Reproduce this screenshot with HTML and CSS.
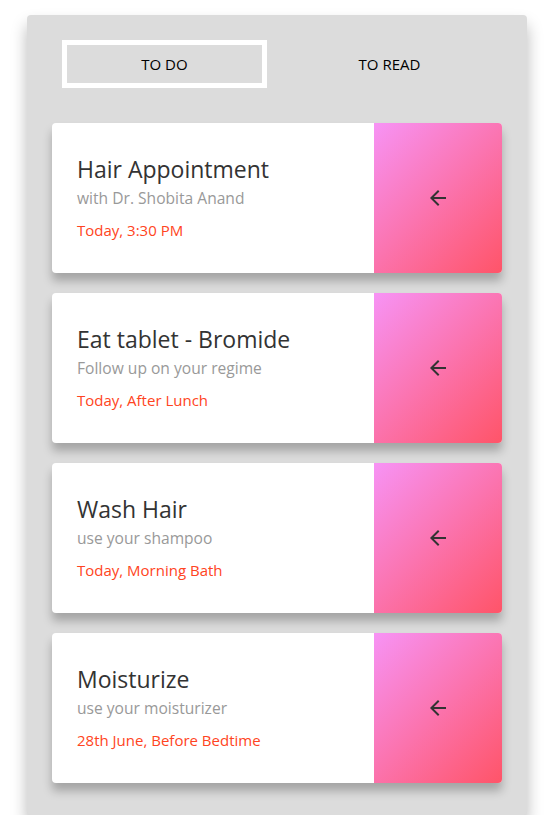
FILE: index.html
```html
<!DOCTYPE html>
<html lang="en">
<head>
<meta charset="utf-8">
<title>Tasks</title>
<link rel="stylesheet" href="styles.css">
</head>
<body>
<div class="panel">
  <nav class="tabs">
    <div class="tab active">TO DO</div>
    <div class="tab">TO READ</div>
  </nav>
  <div class="list">
    <div class="card">
      <div class="info">
        <div class="title">Hair Appointment</div>
        <div class="sub">with Dr. Shobita Anand</div>
        <div class="when">Today, 3:30 PM</div>
      </div>
      <div class="action"><svg class="arrow" viewBox="0 0 24 24" width="24" height="24"><path d="M20 11H7.83l5.59-5.59L12 4l-8 8 8 8 1.41-1.41L7.83 13H20v-2z"/></svg></div>
    </div>
    <div class="card">
      <div class="info">
        <div class="title">Eat tablet - Bromide</div>
        <div class="sub">Follow up on your regime</div>
        <div class="when">Today, After Lunch</div>
      </div>
      <div class="action"><svg class="arrow" viewBox="0 0 24 24" width="24" height="24"><path d="M20 11H7.83l5.59-5.59L12 4l-8 8 8 8 1.41-1.41L7.83 13H20v-2z"/></svg></div>
    </div>
    <div class="card">
      <div class="info">
        <div class="title">Wash Hair</div>
        <div class="sub">use your shampoo</div>
        <div class="when">Today, Morning Bath</div>
      </div>
      <div class="action"><svg class="arrow" viewBox="0 0 24 24" width="24" height="24"><path d="M20 11H7.83l5.59-5.59L12 4l-8 8 8 8 1.41-1.41L7.83 13H20v-2z"/></svg></div>
    </div>
    <div class="card">
      <div class="info">
        <div class="title">Moisturize</div>
        <div class="sub">use your moisturizer</div>
        <div class="when">28th June, Before Bedtime</div>
      </div>
      <div class="action"><svg class="arrow" viewBox="0 0 24 24" width="24" height="24"><path d="M20 11H7.83l5.59-5.59L12 4l-8 8 8 8 1.41-1.41L7.83 13H20v-2z"/></svg></div>
    </div>
  </div>
</div>
</body>
</html>
```

FILE: styles.css
```css
* { box-sizing: border-box; }
html, body { margin: 0; padding: 0; background: #fff; }
body { font-family: "Open Sans", "Noto Sans", sans-serif; }

.panel {
  width: 500px;
  margin: 15px auto 0;
  background: #dcdcdc;
  border-radius: 4px;
  padding: 25px 25px 32px;
  box-shadow: 0 10px 16px rgba(0,0,0,0.28);
}

.tabs {
  display: grid;
  grid-template-columns: 1fr 1fr;
  gap: 20px;
  padding: 0 10px;
  margin-bottom: 35px;
}
.tab {
  height: 48px;
  display: flex;
  align-items: center;
  justify-content: center;
  font-size: 15px;
  color: #000;
  border: 5px solid transparent;
}
.tab.active { border-color: #fff; }

.list { display: flex; flex-direction: column; gap: 20px; }

.card {
  display: flex;
  height: 150px;
  background: #fff;
  border-radius: 4px;
  overflow: hidden;
  box-shadow: 0 8px 10px rgba(0,0,0,0.25);
}
.info {
  flex: 1;
  display: flex;
  flex-direction: column;
  justify-content: center;
  padding-left: 25px;
}
.title { font-size: 23px; line-height: 28px; color: #333; }
.sub { font-size: 15.6px; line-height: 22px; color: #999; margin-top: 4px; }
.when { font-size: 15px; line-height: 22px; color: #ff4422; margin-top: 10px; }

.action {
  width: 128px;
  display: flex;
  align-items: center;
  justify-content: center;
  background: linear-gradient(135deg, #f793f5 0%, #ff5468 100%);
}
.arrow { fill: #333; display: block; }
```
